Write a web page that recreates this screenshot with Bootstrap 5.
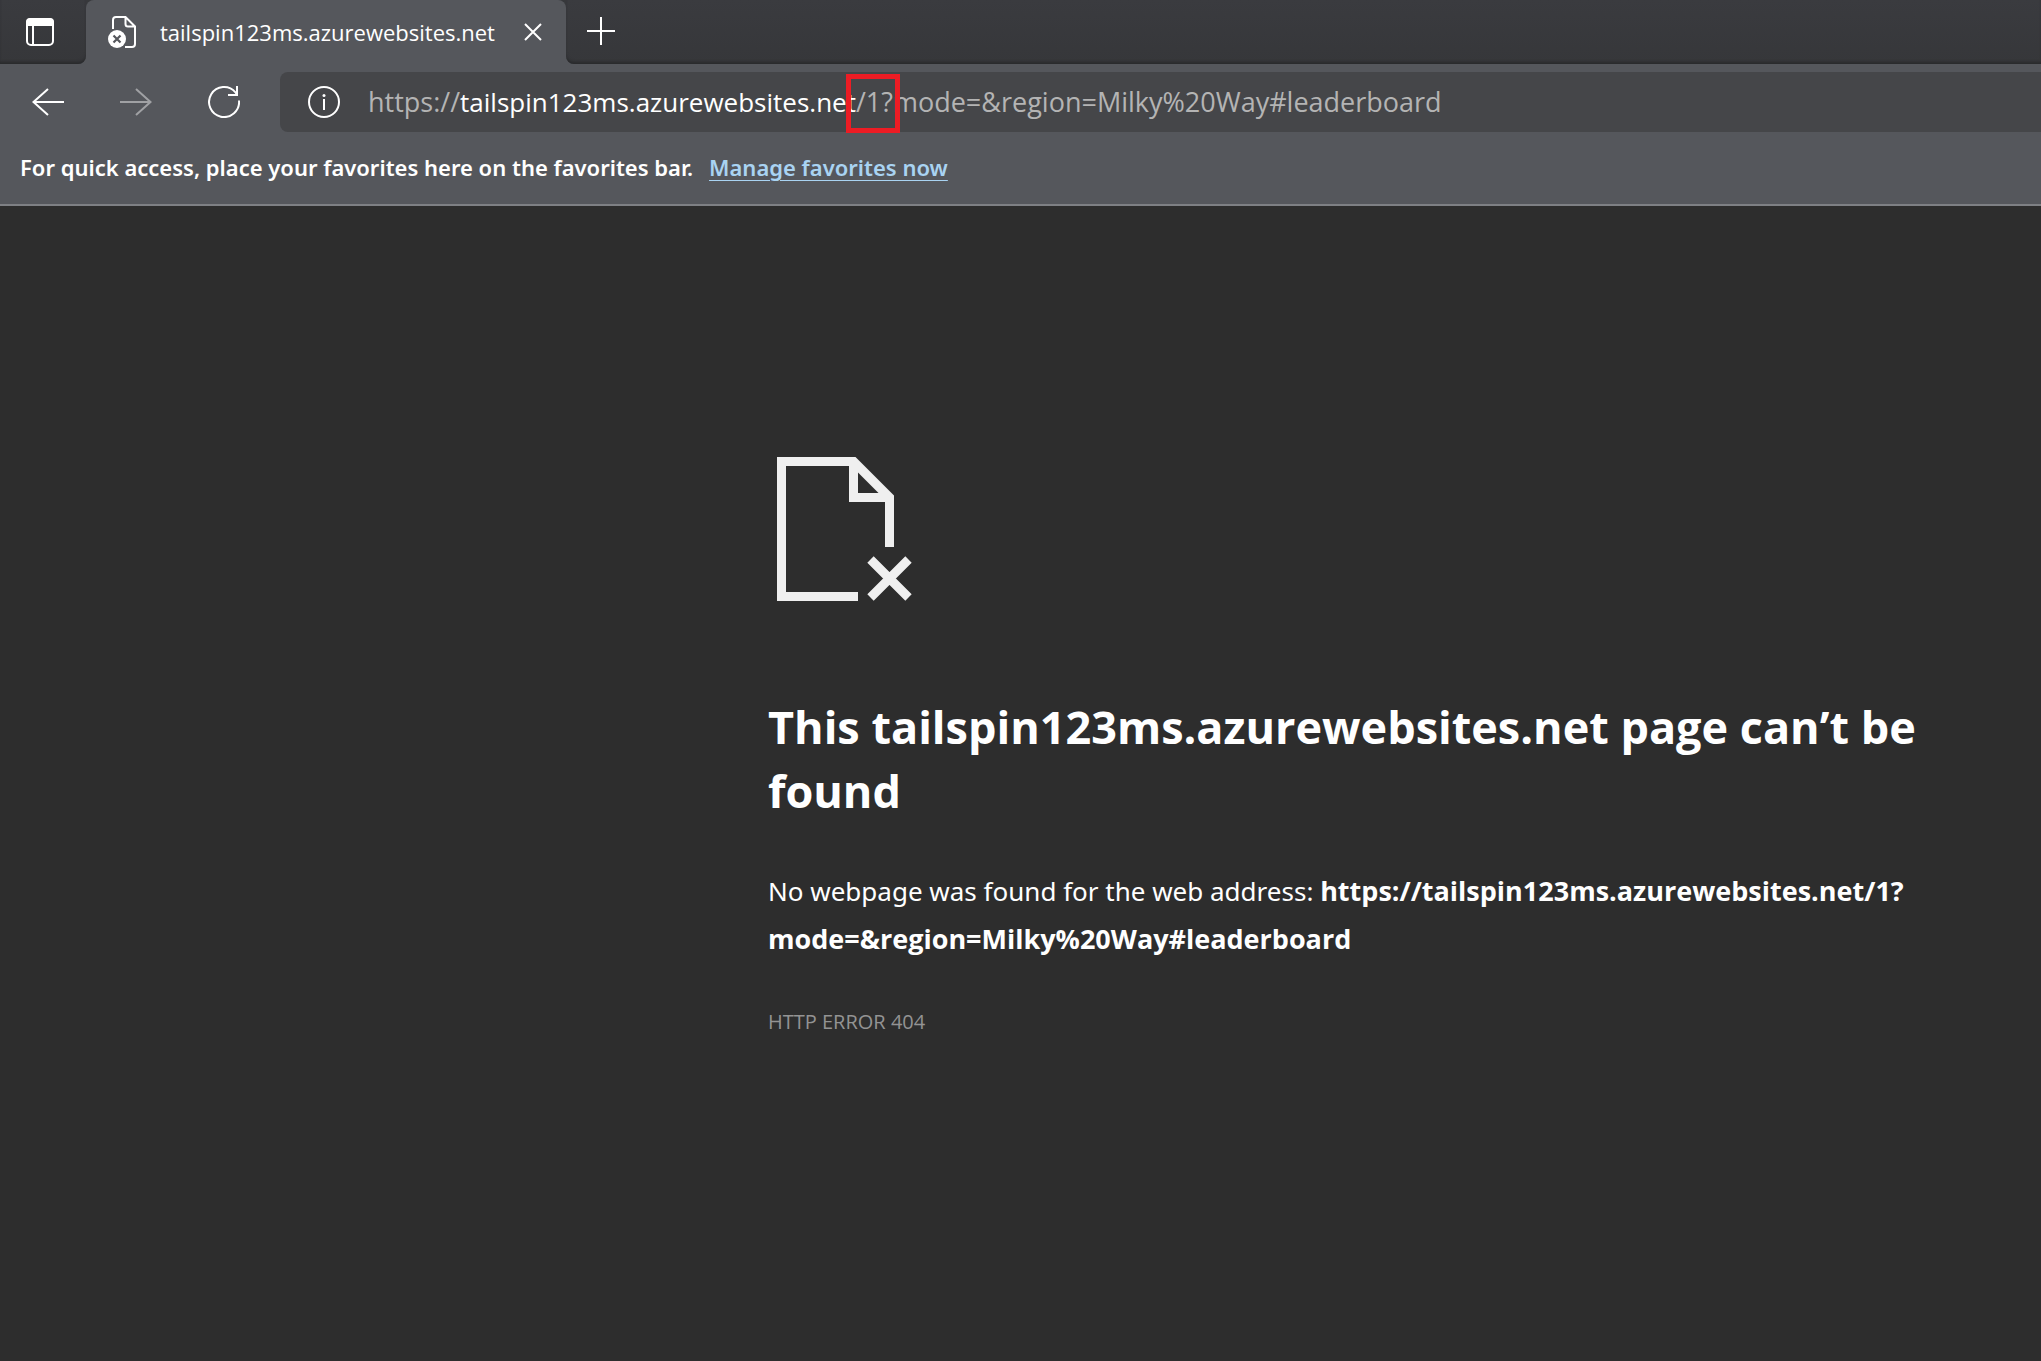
<!DOCTYPE html>
<html lang="en">
<head>
<meta charset="utf-8">
<meta name="viewport" content="width=device-width, initial-scale=1">
<title>tailspin123ms.azurewebsites.net</title>
<link href="https://cdn.jsdelivr.net/npm/bootstrap@5.3.0/dist/css/bootstrap.min.css" rel="stylesheet">
<style>
  body { background: #2d2d2d; color: #fff; font-family: "Open Sans", "Noto Sans", sans-serif; }
  svg { display: block; fill: none; stroke: currentColor; }
  .btn-chrome { color: #fff; border: 0; border-radius: 4px; padding: 0; flex: none; display: flex; align-items: center; justify-content: center; }
  .btn-chrome:disabled { color: #a0a1a4; opacity: 1; border: 0; }
  .tab-strip { height: 64px; background: #55575c; }
  .strip-side { background: linear-gradient(#3a3b3f, #36373a); box-shadow: inset 0 -3px 3px -1px #292a2c; }
  .strip-start { width: 86px; border-bottom-right-radius: 8px; padding-left: 16px; }
  .strip-end { border-bottom-left-radius: 8px; padding: 0 0 2px 11px; }
  .tab-wrap { width: 480px; background: #37383b; }
  .tab-open { background: #55575c; border-radius: 8px 8px 0 0; padding: 0 17px 0 22px; }
  .tab-title { font-size: 22px; line-height: 32px; padding-left: 24px; }
  .tool-row { background: #55575c; padding: 8px 0 8px 16px; height: 76px; gap: 24px; }
  .sq-64 { width: 64px; height: 60px; }
  .sq-48 { width: 48px; height: 48px; }
  .sq-32 { width: 32px; height: 48px; }
  .address { background: #454649; border-radius: 8px 0 0 8px; padding-left: 20px; gap: 20px; }
  .url-text { font-size: 27px; line-height: 40px; color: #b4b4b4; outline: 0; }
  .url-host { font-size: 26px; color: #fff; }
  .marked-part { position: relative; }
  .marked-part::after { content: ""; position: absolute; inset: -9px -7px -13px -10px; border: 5px solid #ed1c24; }
  .fav-row { background: #55575c; height: 66px; border-bottom: 2px solid #7e8084; padding: 0 20px 10px; font-family: "Noto Sans", sans-serif; font-size: 22px; line-height: 32px; gap: 16px; }
  .fav-row a { color: #a9d3f2; text-decoration-thickness: 1px; text-underline-offset: 4px; }
  .error-page { margin-left: 768px; max-width: 1200px; padding: 251px 24px 0 0; }
  .error-art { margin: 0 0 94px 9px; }
  h1 { font-size: 45px; line-height: 64px; font-weight: 700; margin: 0 0 44px; }
  .error-text { font-family: "Noto Sans", sans-serif; font-size: 26px; line-height: 48px; margin: 0 0 43px; }
  .error-text strong { font-family: "Open Sans", sans-serif; font-size: 27px; }
  .error-code { font-size: 20px; line-height: 32px; color: #939393; margin: 0; }
</style>
</head>
<body>
<header>
  <div class="tab-strip d-flex">
    <div class="strip-side strip-start flex-shrink-0 d-flex align-items-center">
      <button class="btn btn-chrome sq-48" type="button" aria-label="Tab actions">
        <svg width="28" height="28" viewBox="0 0 28 28"><rect x="1" y="1" width="26" height="26" rx="4" stroke-width="2"/><path d="M0 8V4Q0 0 4 0H24Q28 0 28 4V8Z" fill="currentColor" stroke="none"/><path d="M7 8V27" stroke-width="2"/></svg>
      </button>
    </div>
    <div class="tab-wrap flex-shrink-0">
      <div class="tab-open h-100 d-flex align-items-center">
        <svg class="flex-shrink-0" width="28" height="32" viewBox="0 0 28 32"><path d="M5 13V4Q5 1 8 1H17.500L27 10.500V28Q27 31 24 31H17M17.500 1V8Q17.500 10.500 20 10.500H27" stroke-width="2"/><circle cx="9" cy="23" r="9" fill="currentColor" stroke="none"/><path d="M5.500 19.500L12.500 26.500M12.500 19.500L5.500 26.500" stroke="#55575c" stroke-width="2.200"/></svg>
        <span class="tab-title text-nowrap flex-grow-1">tailspin123ms.azurewebsites.net</span>
        <button class="btn btn-chrome sq-32" type="button" aria-label="Close tab">
          <svg width="18" height="18" viewBox="0 0 18 18"><path d="M1 1L17 17M17 1L1 17" stroke-width="2"/></svg>
        </button>
      </div>
    </div>
    <div class="strip-side strip-end flex-grow-1 d-flex align-items-center">
      <button class="btn btn-chrome sq-48" type="button" aria-label="New tab">
        <svg width="28" height="28" viewBox="0 0 28 28"><path d="M14 0V28M0 14H28" stroke-width="2"/></svg>
      </button>
    </div>
  </div>
  <div class="tool-row d-flex">
    <button class="btn btn-chrome sq-64" type="button" aria-label="Back">
      <svg width="32" height="28" viewBox="0 0 32 28"><path d="M32 14H2M16 1L1.500 14L16 27" stroke-width="2"/></svg>
    </button>
    <button class="btn btn-chrome sq-64" type="button" aria-label="Forward" disabled>
      <svg width="32" height="28" viewBox="0 0 32 28"><path d="M0 14H30M16 1L30.500 14L16 27" stroke-width="2"/></svg>
    </button>
    <button class="btn btn-chrome sq-64" type="button" aria-label="Refresh">
      <svg width="32" height="32" viewBox="0 0 32 32"><path d="M31 14.500A15 15 0 1 1 27.500 6.300L29 9M29 0V9H20" stroke-width="2"/></svg>
    </button>
    <div class="address flex-grow-1 d-flex align-items-center">
      <button class="btn btn-chrome sq-48" type="button" aria-label="View site information">
        <svg width="32" height="32" viewBox="0 0 32 32"><circle cx="16" cy="16" r="15" stroke-width="2"/><path d="M16 13V24" stroke-width="2"/><circle cx="16" cy="9.500" r="1.500" fill="currentColor" stroke="none"/></svg>
      </button>
      <div class="url-text text-nowrap" role="textbox" contenteditable="true" spellcheck="false" aria-label="Address">https://<span class="url-host">tailspin123ms.azurewebsites.net</span><span class="marked-part">/1?</span>mode=&amp;region=Milky%20Way#leaderboard</div>
    </div>
  </div>
  <div class="fav-row d-flex align-items-center fw-semibold text-nowrap">
    <span>For quick access, place your favorites here on the favorites bar.</span>
    <a href="#favorites">Manage favorites now</a>
  </div>
</header>
<main class="error-page">
  <svg class="error-art" width="135" height="144" viewBox="0 0 135 144"><path fill="#efefef" fill-rule="evenodd" stroke="none" d="M0 0H78.500L117 38.500V90H108V45H72V9H9V135H81V144H0ZM81 15.500V36H101.500Z"/><path stroke="#efefef" stroke-width="9" d="M93.500 102.500L131.500 140.500M131.500 102.500L93.500 140.500"/></svg>
  <h1>This tailspin123ms.azurewebsites.net page can’t be found</h1>
  <p class="error-text">No webpage was found for the web address: <strong>https://tailspin123ms.azurewebsites.net/1?<wbr>mode=&amp;region=Milky%20Way#leaderboard</strong></p>
  <p class="error-code">HTTP ERROR 404</p>
</main>
<script src="https://cdn.jsdelivr.net/npm/bootstrap@5.3.0/dist/js/bootstrap.bundle.min.js"></script>
</body>
</html>
